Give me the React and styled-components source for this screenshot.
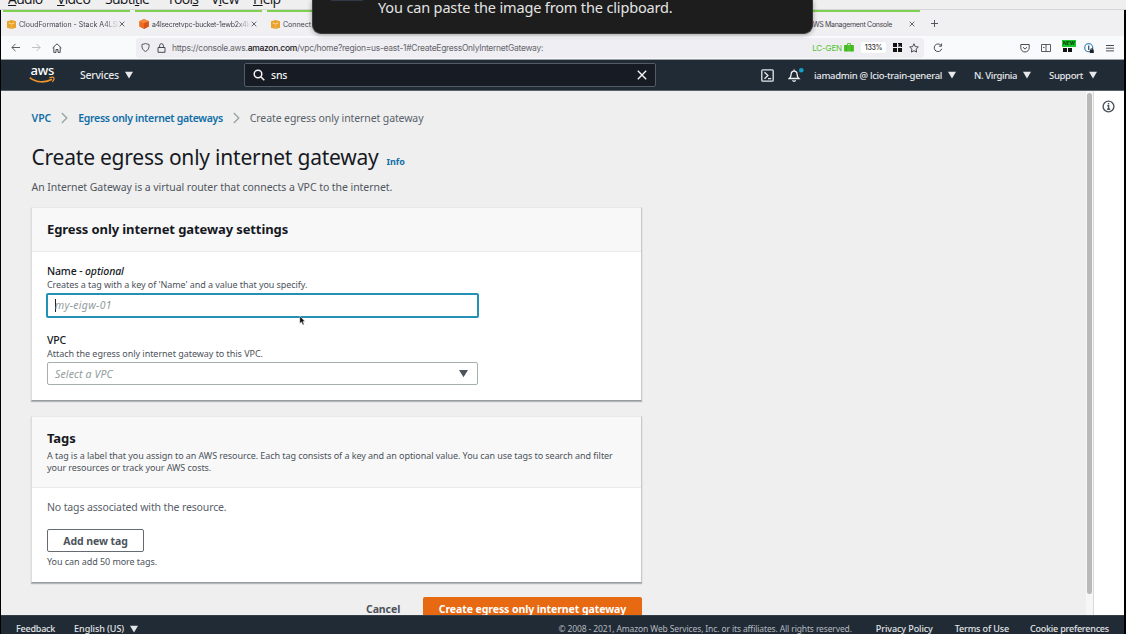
import React from "react";
import styled, { createGlobalStyle, css } from "styled-components";

const Global = createGlobalStyle`
  * { box-sizing: border-box; }
  body { margin: 0; background: #000; overflow: hidden; }
`;

const ui = css`font-family: "Noto Sans", "Open Sans", sans-serif;`;
const system = css`font-family: Inter, Roboto, sans-serif;`;

const Screen = styled.div`
  ${ui}
  position: relative;
  display: flex;
  flex-direction: column;
  width: 1126px;
  height: 634px;
  overflow: hidden;
  white-space: nowrap;
  background: #000;
`;

/* player menu bar */
const MenuBar = styled.div`
  display: flex;
  flex: none;
  height: 10px;
  padding-left: 8px;
  overflow: hidden;
  background: #efefef;
  border-bottom: 1px solid #d4d4d4;
`;
const MenuItem = styled.span`
  width: ${(p) => p.$w}px;
  margin-top: -11px;
  font: 14px/20px "Open Sans", sans-serif;
  letter-spacing: -0.7px;
  color: #16161c;
  text-underline-offset: 1px;
  u { text-decoration-thickness: 1px; }
`;

/* notification */
const Toast = styled.div`
  position: absolute;
  left: 312px;
  top: 0;
  width: 501px;
  height: 34px;
  padding-left: 65px;
  background: #1d1d1d;
  border: 1px solid #3a3a3a;
  border-top: 0;
  border-radius: 0 0 9px 9px;
  box-shadow: 0 1px 5px rgba(0, 0, 0, 0.35);
  font: 14.5px/14px "Noto Sans", sans-serif;
  letter-spacing: -0.15px;
  color: #e4e4e4;
`;
const ToastThumb = styled.span`
  position: absolute;
  left: 18px;
  top: 0;
  width: 32px;
  height: 1px;
  background: #2e3a45;
`;

/* browser */
const Browser = styled.div`
  display: flex;
  flex: 1;
  flex-direction: column;
  min-height: 0;
  margin: 0 2px 0 1px;
  background: #efefef;
`;
const TabStrip = styled.div`
  ${system}
  display: flex;
  flex: none;
  height: 26px;
  padding-left: 2px;
  background: #f0eff2;
`;
const Tab = styled.div`
  display: flex;
  align-items: center;
  width: 127px;
  height: 26px;
  margin-right: ${(p) => p.$gap ?? 5}px;
  padding: 0 5px 0 4px;
  border-top: 2px solid #7fd04f;
  font-size: 7px;
  letter-spacing: ${(p) => p.$ls || 0}px;
  color: #45454d;
`;
const TabTitle = styled.span`
  flex: 1;
  min-width: 0;
  margin-left: 3px;
  overflow: hidden;
  mask-image: ${(p) => (p.$plain ? "none" : "linear-gradient(90deg, #000 85%, transparent)")};
`;
const NewTab = styled.div`
  display: flex;
  align-items: center;
  padding: 1px 0 0 11px;
  color: #45454d;
`;
const NavBar = styled.div`
  ${system}
  display: flex;
  flex: none;
  align-items: center;
  height: 24px;
  padding-left: 9px;
  background: #f9fafb;
  border-bottom: 1px solid #9b9fa3;
`;
const NavIcon = styled.span`
  display: flex;
  flex: none;
  justify-content: center;
  width: ${(p) => p.$w}px;
  color: ${(p) => p.$c || "#4a4a52"};
`;
const UrlField = styled.div`
  display: flex;
  flex: none;
  align-items: center;
  width: 788px;
  height: 20px;
  margin-left: 74px;
  padding-left: 1px;
  border-radius: 3px;
  background: #efeef2;
`;
const Url = styled.span`
  width: 642px;
  margin-left: 3px;
  font-size: 8.5px;
  letter-spacing: -0.285px;
  color: #66666d;
  b { font-weight: 500; color: #18181c; }
`;
const Identity = styled.span`
  display: flex;
  align-items: center;
  gap: 2px;
  width: 49px;
  font-size: 8px;
  letter-spacing: -0.15px;
  color: #4fc32c;
`;
const Zoom = styled.span`
  width: 25px;
  margin-right: 5px;
  border-radius: 2px;
  background: #fff;
  font: 500 7px/11px Inter, sans-serif;
  letter-spacing: -0.3px;
  text-align: center;
  color: #333;
`;
const Addons = styled.div`
  display: flex;
  align-items: center;
  margin-left: 62px;
`;
const AddonGrid = styled.span`
  display: flex;
  flex-direction: column;
  align-items: center;
  width: 23px;
  margin-top: -4px;
`;
const NewBadge = styled.span`
  width: 14px;
  margin-left: 3px;
  background: #19c72b;
  font: 700 5px/7px Inter, sans-serif;
  text-align: center;
  color: #093c0d;
`;

/* console header */
const Header = styled.header`
  display: flex;
  flex: none;
  align-items: center;
  height: 31px;
  padding-left: 28px;
  background: #212b36;
  border-bottom: 1px solid #59616a;
  color: #e6e8ea;
`;
const Services = styled.span`
  display: flex;
  align-items: center;
  gap: 6px;
  width: 164px;
  margin-left: 25px;
  font-size: 10.5px;
  font-weight: 500;
  letter-spacing: -0.24px;
`;
const Search = styled.div`
  display: flex;
  align-items: center;
  width: 412px;
  height: 24px;
  padding: 0 8px;
  border: 1px solid #545b64;
  border-radius: 2px;
  background: #171b23;
  font-size: 10.5px;
  font-weight: 500;
  letter-spacing: -0.2px;
  color: #f4f4f4;
  span { flex: 1; margin-left: 6px; }
`;
const HeaderIcons = styled.div`
  display: flex;
  align-items: center;
  gap: 14px;
  margin-left: 105px;
`;
const HeaderItem = styled.span`
  display: flex;
  align-items: center;
  gap: 6px;
  margin-left: ${(p) => p.$ml}px;
  font-size: 9.5px;
  font-weight: 500;
  letter-spacing: ${(p) => p.$ls}px;
`;

/* page body */
const Body = styled.div`
  display: flex;
  flex: none;
  height: 524px;
  overflow: hidden;
`;
const Main = styled.main`
  flex: 1;
  padding: 18px 0 0 30px;
  background: #efefef;
`;
const Track = styled.div`
  width: 8px;
  padding: 2px 1px 0;
  background: #f6f6f6;
  border-right: 1px solid #dadada;
`;
const Thumb = styled.div`
  width: 5px;
  height: 501px;
  border-radius: 3px;
  background: #b9b9b9;
`;
const InfoPanel = styled.aside`
  display: flex;
  justify-content: center;
  width: 30px;
  padding: 9px 1px 0 0;
  background: #fff;
  color: #4c535b;
`;
const Breadcrumbs = styled.nav`
  display: flex;
  align-items: center;
  height: 18px;
  padding-left: 0.5px;
  font-size: 10.5px;
  color: #59616a;
  svg { margin: 0 10px; }
`;
const Crumb = styled.a`
  font-weight: 600;
  letter-spacing: ${(p) => p.$ls}px;
  color: #0f6ea8;
`;
const Current = styled.span`letter-spacing: -0.11px;`;
const Title = styled.h1`
  display: flex;
  align-items: baseline;
  height: 30px;
  margin: 15px 0 0 0.5px;
  font-size: 21px;
  font-weight: 400;
  line-height: 30px;
  letter-spacing: -0.22px;
  color: #16191f;
`;
const InfoLink = styled.a`
  margin-left: 8px;
  font-size: 9px;
  font-weight: 700;
  letter-spacing: -0.1px;
  color: #0f6ea8;
`;
const Intro = styled.p`
  height: 18px;
  margin: 6px 0 11px 0.5px;
  font-size: 10.5px;
  line-height: 18px;
  letter-spacing: -0.06px;
  color: #50565e;
`;
const Card = styled.section`
  width: 611px;
  height: ${(p) => p.$h}px;
  margin-bottom: 15px;
  background: #fff;
  border: 1px solid;
  border-color: #e8eaea #c6caca #979d9f #dcdfdf;
  box-shadow: 0 1px 1px rgba(0, 20, 30, 0.25);
`;
const CardHead = styled.div`
  height: ${(p) => p.$h}px;
  padding: 12px 15px 0;
  background: #f8f8f8;
  border-bottom: 1px solid #e9ebeb;
`;
const CardTitle = styled.h2`
  margin: 0;
  font-size: 13px;
  font-weight: 700;
  line-height: 18px;
  letter-spacing: -0.1px;
  color: #16191f;
`;
const CardBody = styled.div`
  padding: ${(p) => p.$top}px 15px 0;
`;
const Hint = styled.p`
  margin: ${(p) => p.$mt || 0}px 0 0;
  font-size: 9px;
  line-height: 12px;
  letter-spacing: ${(p) => p.$ls || -0.065}px;
  color: #4c535b;
`;
const Label = styled.div`
  font-size: 10.5px;
  font-weight: 500;
  line-height: 15px;
  letter-spacing: -0.14px;
  color: #16191f;
  i { letter-spacing: -0.1px; }
`;
const TextField = styled.div`
  display: flex;
  align-items: center;
  width: 433px;
  height: 25px;
  margin: 2px 0 15px -1px;
  padding: 0 0 1px 7px;
  border: 2px solid #2291b5;
  border-radius: 2px;
  font-size: 10.5px;
  font-style: italic;
  letter-spacing: 0.3px;
  color: #919c9d;
`;
const TextCaret = styled.span`
  width: 1px;
  height: 13px;
  margin-right: -1px;
  background: #222;
`;
const Select = styled.div`
  display: flex;
  align-items: center;
  justify-content: space-between;
  width: 431px;
  height: 23px;
  margin-top: 2px;
  padding: 0 9px 0 7px;
  border: 1px solid #a5afb0;
  border-radius: 2px;
  font-size: 10.5px;
  font-style: italic;
  letter-spacing: 0.15px;
  color: #919c9d;
  svg { color: #4c535b; }
`;
const Empty = styled.p`
  height: 18px;
  margin: 0 0 13px;
  font-size: 10.5px;
  line-height: 18px;
  letter-spacing: -0.135px;
  color: #59616a;
`;
const Button = styled.button`
  ${ui}
  display: block;
  width: ${(p) => p.$w}px;
  height: 23px;
  margin: 0;
  padding: 0;
  border: ${(p) => (p.$bare ? "0" : "1px solid #646b72")};
  border-radius: 2px;
  background: ${(p) => (p.$bare ? "transparent" : "#fff")};
  font-size: 10.5px;
  font-weight: 700;
  letter-spacing: -0.08px;
  white-space: nowrap;
  color: #4c535b;
`;
const PrimaryButton = styled(Button)`
  border: 0;
  background: #e76912;
  color: #fff;
`;
const Actions = styled.div`
  display: flex;
  justify-content: flex-end;
  gap: 23px;
  width: 611px;
  margin-top: -1px;
`;
const Footer = styled.footer`
  display: flex;
  flex: none;
  height: 19px;
  padding: 0 15px;
  overflow: hidden;
  background: #212b36;
  border-top: 1px solid #343e48;
  font-size: 9px;
  font-weight: 500;
  line-height: 26px;
  color: #e2e5e7;
`;
const FootLink = styled.span`
  display: flex;
  align-items: center;
  gap: 6px;
  height: 26px;
  margin-left: ${(p) => p.$ml || 0}px;
  letter-spacing: ${(p) => p.$ls}px;
`;
const Copyright = styled.span`
  margin-left: auto;
  font-size: 8.5px;
  font-weight: 400;
  letter-spacing: -0.13px;
  color: #b4babf;
`;
const Pointer = styled.svg`
  position: absolute;
  left: 299px;
  top: 315px;
`;

const ArrowDown = ({ s = 8 }) => (
  <svg width={s} height={s} viewBox="0 0 8 8"><path d="M0 .8h8L4 7.4z" fill="currentColor" /></svg>
);
const Line = ({ w = 10, h = w, vb = "0 0 10 10", d, sw = 1, children }) => (
  <svg width={w} height={h} viewBox={vb} fill="none" stroke="currentColor" strokeWidth={sw}>
    {d && <path d={d} />}
    {children}
  </svg>
);
const Close = () => <Line w={6} vb="0 0 6 6" d="M.7.7l4.6 4.6M5.3.7L.7 5.3" sw={0.8} />;
const YellowCube = () => (
  <svg width="9" height="9" viewBox="0 0 9 9">
    <path d="M0 1.2L4.5 0 9 1.2v6.6L4.5 9 0 7.8z" fill="#e9a32c" />
    <path d="M1.800 2.500l2.700.9 2.700-.9v1.200l-2.700.9-2.700-.9z" fill="#f6d595" />
    <path d="M4.500 4.600V9" stroke="#f2c26c" strokeWidth=".6" />
  </svg>
);
const OrangeCube = () => (
  <svg width="10" height="10" viewBox="0 0 10 10">
    <path d="M5 0l4.8 2.3v5.2L5 10 .2 7.5V2.3z" fill="#ee6a1e" />
    <path d="M5 0l4.8 2.3L5 4.2.2 2.3z" fill="#f58a3a" />
    <path d="M5 4.2l4.8-1.9v5.2L5 10z" fill="#d9541a" />
  </svg>
);
const Chevron = () => (
  <svg width="7" height="12" viewBox="0 0 7 12"><path d="M.8 1l5 5-5 5" fill="none" stroke="#98a2a2" strokeWidth="1.3" /></svg>
);
const GridIcon = ({ h = 9 }) => (
  <svg width="9" height={h} viewBox={`0 0 9 ${h}`} fill="#111">
    {h === 9 && <path d="M0 0h4v4H0zM5 0h4v4H7.500V2.500L6 4 5 3l1.500-1.500H5z" />}
    <path d={`M0 ${h - 4}h4v4H0zM5 ${h - 4}h4v4H5z`} />
  </svg>
);
const AwsLogo = () => (
  <svg width="26" height="20" viewBox="0 0 26 20">
    <text x="1.500" y="10" fontFamily="Noto Sans, sans-serif" fontSize="13" fontWeight="500" letterSpacing="-.2" fill="#fff">aws</text>
    <path d="M.8 12.600c6.500 5.200 15.500 5.500 22.200 1.700" fill="none" stroke="#f0932b" strokeWidth="1.600" />
    <path d="M20.300 12.800c2-.7 4-.7 4.500-.2s0 2.400-1.500 4.200" fill="none" stroke="#f0932b" strokeWidth="1.200" />
  </svg>
);

export default function App() {
  return (
    <Screen>
      <Global />
      <MenuBar>
        <MenuItem $w={49}><u>A</u>udio</MenuItem>
        <MenuItem $w={48}><u>V</u>ideo</MenuItem>
        <MenuItem $w={62}>Subti<u>t</u>le</MenuItem>
        <MenuItem $w={44}>Tool<u>s</u></MenuItem>
        <MenuItem $w={42}>V<u>i</u>ew</MenuItem>
        <MenuItem $w={40}><u>H</u>elp</MenuItem>
      </MenuBar>
      <Browser>
        <TabStrip>
          <Tab><YellowCube /><TabTitle>CloudFormation - Stack A4LSECRET</TabTitle><Close /></Tab>
          <Tab $ls={-0.25}><OrangeCube /><TabTitle>a4lsecretvpc-bucket-1ewb2x4l4k</TabTitle><Close /></Tab>
          <Tab $gap={398.5}><YellowCube /><TabTitle $plain>Connect t</TabTitle></Tab>
          <Tab $gap={0} $ls={-0.3}><YellowCube /><TabTitle $plain>AWS Management Console</TabTitle><Close /></Tab>
          <NewTab><Line w={7} vb="0 0 7 7" d="M3.500 0v7M0 3.500h7" sw={0.9} /></NewTab>
        </TabStrip>
        <NavBar>
          <NavIcon $w={10}><Line w={9} d="M10 5H1M5 1L1 5l4 4" /></NavIcon>
          <NavIcon $w={32} $c="#b8b8bd"><Line w={9} d="M0 5h9M5 1l4 4-4 4" /></NavIcon>
          <NavIcon $w={10}><Line d="M.6 5L5 .8 9.400 5M1.800 4.200v5.200h2.200V6.500h2v2.900h2.200V4.200" /></NavIcon>
          <UrlField>
            <NavIcon $w={16}><Line w={9} d="M5 .6L9 1.700c.2 4-1 6.500-4 7.800C2 8.200.8 5.700 1 1.700z" /></NavIcon>
            <NavIcon $w={16}><Line w={9} h={10} vb="0 0 9 10" d="M1 4.500h7v4.800H1zM2.600 4.500V2.600a1.900 1.900 0 013.800 0v1.900" /></NavIcon>
            <Url>https://console.aws.<b>amazon.com</b>/vpc/home?region=us-east-1#CreateEgressOnlyInternetGateway:</Url>
            <Identity>
              LC-GEN
              <svg width="10" height="9" viewBox="0 0 10 9">
                <path d="M0 2h10v6.500H0z" fill="#4fc32c" />
                <path d="M3.500 2V.6h3V2" fill="none" stroke="#4fc32c" />
                <path d="M2.300 2v6.500M7.700 2v6.500" stroke="#2f8f18" strokeWidth=".5" />
              </svg>
            </Identity>
            <Zoom>133%</Zoom>
            <NavIcon $w={13}><GridIcon /></NavIcon>
            <NavIcon $w={20}><Line d="M5 .8l1.300 2.800 3 .4-2.200 2.100.5 3L5 7.700 2.400 9.100l.5-3L.7 4l3-.4z" /></NavIcon>
          </UrlField>
          <NavIcon $w={28}><Line d="M8.700 5.800A3.800 3.800 0 118 2.400M8.600.6v2.600H6" /></NavIcon>
          <Addons>
            <NavIcon $w={21}><Line d="M.8 1.500h8.400v3.300a4.200 4.200 0 01-8.400 0zM3 4.200l2 1.900 2-1.900" /></NavIcon>
            <NavIcon $w={21}><Line d="M.5 1.500h9v7h-9zM5 1.500v7M2 4.500h1.500" sw={0.9} /></NavIcon>
            <AddonGrid><NewBadge>NEW</NewBadge><GridIcon h={5} /></AddonGrid>
            <NavIcon $w={20}>
              <svg width="10" height="10" viewBox="0 0 10 10">
                <circle cx="4.700" cy="4.700" r="4" fill="#fff" stroke="#4a8bc4" strokeWidth="1.300" />
                <path d="M4.700 2.500v4.400" stroke="#35516e" strokeWidth="1.300" />
                <path d="M5.800 6.800h4V10h-4z" fill="#222" />
                <path d="M6.800 7V5.800h2V7" fill="none" stroke="#222" strokeWidth=".8" />
              </svg>
            </NavIcon>
            <NavIcon $w={22}><Line w={8} vb="0 0 8 8" d="M0 1.500h8M0 4.200h8M0 6.900h8" /></NavIcon>
          </Addons>
        </NavBar>
        <Header>
          <AwsLogo />
          <Services>Services<ArrowDown /></Services>
          <Search>
            <Line w={12} vb="0 0 12 12" sw={1.5}><circle cx="5" cy="5" r="3.800" /><path d="M7.800 7.800L11.300 11.300" /></Line>
            <span>sns</span>
            <Line d="M.8.8l8.400 8.400M9.200.8L.8 9.200" sw={1.4} />
          </Search>
          <HeaderIcons>
            <Line w={13} vb="0 0 13 13" sw={1.3}><rect x=".8" y=".8" width="11.400" height="11.400" rx="1" /><path d="M3.500 3.300l3.400 3.200-3.400 3.200M7 9.700h3.200" /></Line>
            <svg width="16" height="15" viewBox="0 0 16 15">
              <path d="M1.300 10.500c1.600-1.400 1.800-2.300 1.800-4 0-2 1.200-3.400 3-3.400s3 1.400 3 3.400c0 1.700.2 2.600 1.800 4zM4.600 12.300c.6 1.400 2.400 1.400 3 0M6.100 3V1.600" fill="none" stroke="#f0f1f2" strokeWidth="1.300" />
              <circle cx="13.300" cy="2.300" r="2.300" fill="#12a0c8" />
            </svg>
          </HeaderIcons>
          <HeaderItem $ml={10} $ls={-0.31}>iamadmin @ lcio-train-general<ArrowDown /></HeaderItem>
          <HeaderItem $ml={18} $ls={-0.38}>N. Virginia<ArrowDown /></HeaderItem>
          <HeaderItem $ml={18} $ls={-0.34}>Support<ArrowDown /></HeaderItem>
        </Header>
        <Body>
          <Main>
            <Breadcrumbs>
              <Crumb $ls={0}>VPC</Crumb><Chevron />
              <Crumb $ls={-0.32}>Egress only internet gateways</Crumb><Chevron />
              <Current>Create egress only internet gateway</Current>
            </Breadcrumbs>
            <Title>Create egress only internet gateway<InfoLink>Info</InfoLink></Title>
            <Intro>An Internet Gateway is a virtual router that connects a VPC to the internet.</Intro>
            <Card $h={194}>
              <CardHead $h={44}><CardTitle>Egress only internet gateway settings</CardTitle></CardHead>
              <CardBody $top={12}>
                <Label>Name - <i>optional</i></Label>
                <Hint>Creates a tag with a key of 'Name' and a value that you specify.</Hint>
                <TextField><TextCaret />my-eigw-01</TextField>
                <Label>VPC</Label>
                <Hint $ls={-0.037}>Attach the egress only internet gateway to this VPC.</Hint>
                <Select>Select a VPC<ArrowDown s={9} /></Select>
              </CardBody>
            </Card>
            <Card $h={167}>
              <CardHead $h={71}>
                <CardTitle>Tags</CardTitle>
                <Hint $mt={3}>A tag is a label that you assign to an AWS resource. Each tag consists of a key and an optional value. You can use tags to search and filter<br />your resources or track your AWS costs.</Hint>
              </CardHead>
              <CardBody $top={10}>
                <Empty>No tags associated with the resource.</Empty>
                <Button $w={97}>Add new tag</Button>
                <Hint $mt={4}>You can add 50 more tags.</Hint>
              </CardBody>
            </Card>
            <Actions>
              <Button $bare $w={34}>Cancel</Button>
              <PrimaryButton $w={219}>Create egress only internet gateway</PrimaryButton>
            </Actions>
          </Main>
          <Track><Thumb /></Track>
          <InfoPanel>
            <Line w={13} vb="0 0 13 13" sw={1.4}><circle cx="6.500" cy="6.500" r="5.400" /><path d="M6.500 3v1.400M5.300 5.700h1.300v3.400M5 9.300h3.200" /></Line>
          </InfoPanel>
        </Body>
        <Footer>
          <FootLink $ls={-0.22}>Feedback</FootLink>
          <FootLink $ml={19} $ls={-0.06}>English (US)<ArrowDown /></FootLink>
          <Copyright>© 2008 - 2021, Amazon Web Services, Inc. or its affiliates. All rights reserved.</Copyright>
          <FootLink $ml={24} $ls={-0.09}>Privacy Policy</FootLink>
          <FootLink $ml={22} $ls={-0.14}>Terms of Use</FootLink>
          <FootLink $ml={21} $ls={-0.21}>Cookie preferences</FootLink>
        </Footer>
      </Browser>
      <Toast><ToastThumb />You can paste the image from the clipboard.</Toast>
      <Pointer width="7" height="11" viewBox="0 0 7 11"><path d="M.8 1v7.600L2.500 7l1.300 3 1.300-.6L3.900 6.500H6z" fill="#111" stroke="#eee" strokeWidth=".5" /></Pointer>
    </Screen>
  );
}
